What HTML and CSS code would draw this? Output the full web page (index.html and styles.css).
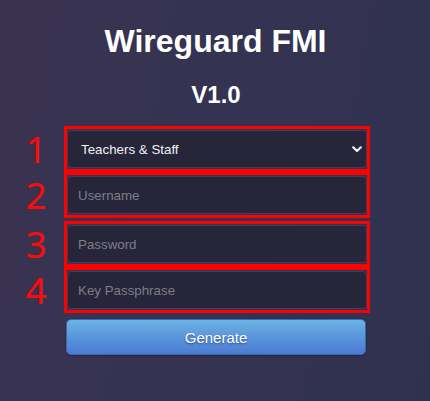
FILE: index.html
```html
<!DOCTYPE html>
<html lang="en">
<head>
<meta charset="utf-8">
<title>Wireguard FMI</title>
<link rel="stylesheet" href="styles.css">
</head>
<body>
<main class="page">
  <h1 class="title">Wireguard FMI</h1>
  <h2 class="version">V1.0</h2>
  <form class="form">
    <div class="row">
      <span class="num">1</span>
      <div class="frame">
        <div class="select-wrap">
          <select class="field select">
            <option>Teachers &amp; Staff</option>
            <option>Students</option>
          </select>
          <svg class="chev" width="10" height="7" viewBox="0 0 10 7"><path d="M1.2 1.3 L5 5 L8.8 1.3" fill="none" stroke="#f2f2f2" stroke-width="2.2" stroke-linecap="round" stroke-linejoin="round"/></svg>
        </div>
      </div>
    </div>
    <div class="row">
      <span class="num">2</span>
      <div class="frame"><input class="field" type="text" placeholder="Username"></div>
    </div>
    <div class="row row-gap">
      <span class="num">3</span>
      <div class="frame"><input class="field" type="password" placeholder="Password"></div>
    </div>
    <div class="row">
      <span class="num">4</span>
      <div class="frame"><input class="field" type="password" placeholder="Key Passphrase"></div>
    </div>
    <div class="row btn-row">
      <span></span>
      <button class="btn" type="button">Generate</button>
    </div>
  </form>
</main>
</body>
</html>
```

FILE: styles.css
```css
html, body {
  margin: 0;
  padding: 0;
}
body {
  min-height: 401px;
  background: linear-gradient(100deg, #3a3350 0%, #343352 55%, #30314f 100%);
  font-family: "Liberation Sans", Arial, sans-serif;
  color: #fff;
}
.page {
  display: flex;
  flex-direction: column;
  padding-top: 23px;
}
.title {
  margin: 0;
  font-size: 32px;
  line-height: 37px;
  font-weight: bold;
  text-align: center;
  padding-left: 1px;
}
.version {
  margin: 21px 0 0;
  font-size: 24px;
  line-height: 28px;
  font-weight: bold;
  text-align: center;
  padding-left: 2px;
}
.form {
  margin-top: 17px;
  display: flex;
  flex-direction: column;
}
.row {
  display: grid;
  grid-template-columns: 64px 306px;
  align-items: center;
}
.row-gap {
  margin-top: 3px;
}
.num {
  font-family: "Noto Sans", "DejaVu Sans", sans-serif;
  font-size: 37px;
  line-height: 46px;
  color: #ff0a0a;
  text-align: center;
  padding-left: 8px;
}
.frame {
  border: 3px solid #ff0000;
  padding: 1px 0;
}
.field {
  display: block;
  box-sizing: border-box;
  width: 300px;
  height: 38px;
  margin: 0;
  padding: 0 10px;
  background: #26253a;
  border: 1px solid #3e3e58;
  border-radius: 4px;
  color: #f2f2f2;
  font-family: "Liberation Sans", Arial, sans-serif;
  font-size: 13.33px;
  outline: none;
}
.field::placeholder {
  color: #7e7d86;
}
.select-wrap {
  position: relative;
}
.select {
  appearance: none;
  -webkit-appearance: none;
  padding-left: 13px;
}
.chev {
  position: absolute;
  left: 285px;
  top: 16px;
  pointer-events: none;
}
.btn-row {
  margin-top: 6px;
}
.btn {
  width: 300px;
  height: 36px;
  margin-left: 2px;
  box-sizing: border-box;
  border: 1px solid #3d67b5;
  border-radius: 5px;
  background: linear-gradient(to bottom, #6bb3e3 0%, #5a95dc 50%, #4b7bd4 100%);
  color: #fff;
  font-family: "Liberation Sans", Arial, sans-serif;
  font-size: 15px;
  text-shadow: 0 1px 2px rgba(0, 0, 0, 0.45);
  box-shadow: 0 1px 2px rgba(0, 0, 0, 0.3);
  cursor: pointer;
}
```
